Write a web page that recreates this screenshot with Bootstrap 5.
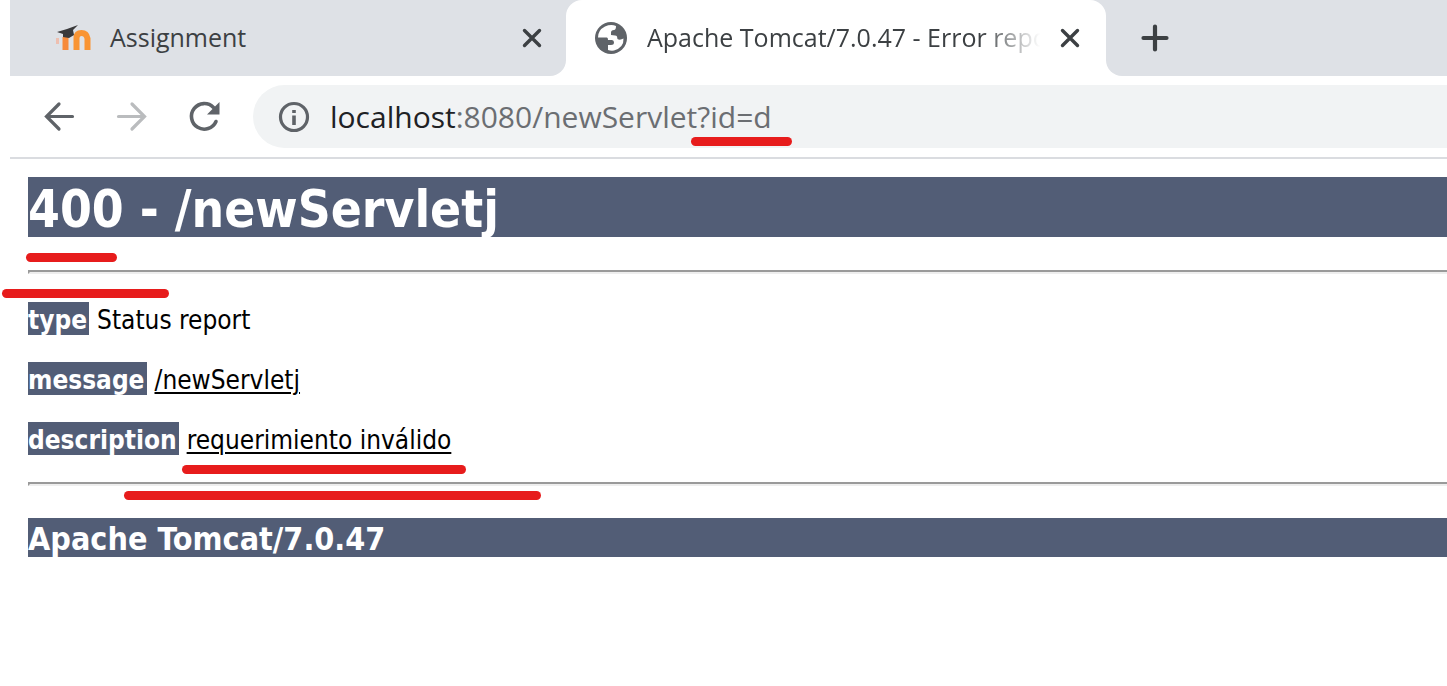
<!DOCTYPE html>
<html lang="en">
<head>
<meta charset="utf-8">
<meta name="viewport" content="width=device-width, initial-scale=1">
<title>Apache Tomcat/7.0.47 - Error report</title>
<link href="https://cdn.jsdelivr.net/npm/bootstrap@5.3.0/dist/css/bootstrap.min.css" rel="stylesheet">
<style>
  body { background: #fff; color: #000; overflow-x: hidden; }
  .browser { font-family: "Open Sans", "Noto Sans", sans-serif; margin-left: 10px; }
  .icon-btn { border: 0; background: none; padding: 0; line-height: 0; flex: none; color: #3c4043; }

  .tab-strip { height: 76px; background: #fff; }
  .tab-shade { background: #dee1e6; }
  .tab-item { font-size: 25px; line-height: 34px; color: #3c4043; }
  .tab-item a { color: inherit; padding-bottom: 2px; }
  .tab-idle { width: 556px; padding: 0 24px 0 44px; border-radius: 0 0 16px 0; }
  .tab-back { width: 540px; }
  .tab-active { background: #fff; height: 76px; padding: 0 26px 0 28px; border-radius: 16px 16px 0 0; }
  .tab-rest { padding-left: 34px; border-radius: 0 0 0 16px; }
  .tab-icon { margin-right: 19px; }
  .tab-close { margin-left: 20px; }
  .tab-title { overflow: hidden; white-space: nowrap; -webkit-mask-image: linear-gradient(to left, transparent, #000 60px); mask-image: linear-gradient(to left, transparent, #000 60px); }

  .tool-bar { height: 83px; padding-left: 32px; border-bottom: 2px solid #dadce0; }
  .tool-bar .icon-btn { color: #5f6368; margin-right: 36px; }
  .address-pill { height: 63px; margin-left: -5px; padding-left: 24px; background: #f1f3f4; border-radius: 32px 0 0 32px; font-size: 30px; line-height: 40px; }
  .address-pill .icon-btn { margin-right: 19px; }
  .address-pill label { color: #202124; }
  .address-pill input { border: 0; padding: 0; background: none; color: #6b6e72; outline: 0; min-width: 0; }

  .report { font-family: "DejaVu Sans Condensed", "DejaVu Sans", Tahoma, sans-serif; font-size: 26px; line-height: 29px; padding: 18px 0 0 28px; }
  .report h1, .report h3, .report b { background: #525d76; color: #fff; font-weight: 700; }
  .report h1 { font-size: 51px; line-height: 54px; padding-top: 6px; margin-bottom: 33px; }
  .report h3 { font-size: 32px; line-height: 35px; padding-top: 4px; margin: 0; }
  .report p { margin-bottom: 27px; display: flex; gap: 8px; }
  .report p > * { padding-top: 4px; }
  .report b { padding-right: 2px; }
  .report u { text-decoration-thickness: 2px; text-underline-offset: 3px; }
  .report hr { margin: 0 0 28px; height: 4px; opacity: 1; border: solid; border-width: 2px 0 2px 2px; border-color: #9a9a9a #eee #eee #9a9a9a; }
  .report hr.closing { margin-bottom: 32px; }

  .pen { position: absolute; height: 9px; border-radius: 5px; background: #e71c1c; }
  .pen-query { left: 438px; top: 52px; width: 101px; }
  .pen-code { left: 26px; top: 94px; width: 91px; }
  .pen-rule { left: 2px; top: 130px; width: 167px; }
  .pen-text { left: 182px; top: 306px; width: 284px; }
  .pen-foot { left: 124px; top: 332px; width: 417px; }
</style>
</head>
<body>
<header class="browser">
  <nav class="tab-strip d-flex" aria-label="Tabs">
    <div class="tab-item tab-shade tab-idle d-flex align-items-center">
      <svg class="flex-shrink-0 me-3" width="40" height="32" viewBox="0 0 40 32" aria-hidden="true">
        <path d="M11.500 28V15" fill="none" stroke="#f68a3a" stroke-width="6"/>
        <path d="M22.500 28V16q0-5 5-5t6 5.500V28" fill="none" stroke="#f99433" stroke-width="6"/>
        <path d="M3.500 16v6" stroke="#eebfb0" stroke-width="3"/>
        <path d="M3 10 13 7 24 3 19 8 20 13 15 16 9 15 9 12Z" fill="#39393b"/>
      </svg>
      <a href="#" class="text-decoration-none flex-grow-1">Assignment</a>
      <button class="icon-btn" type="button" aria-label="Close Assignment"><svg width="20" height="20" viewBox="0 0 20 20"><path d="M2.500 2.500 17.500 17.500M17.500 2.500 2.500 17.500" stroke="currentColor" stroke-width="3.400" stroke-linecap="round"/></svg></button>
    </div>
    <div class="tab-item tab-shade tab-back">
      <div class="tab-active d-flex align-items-center">
        <svg class="tab-icon flex-shrink-0" width="34" height="34" viewBox="0 0 34 34" aria-hidden="true">
          <circle cx="17" cy="17" r="16" fill="#5f6368"/>
          <path d="M4 16.500H13Q14 16.500 14 19H18Q20 19 20 21.500 20 24 17 24H14V29Q17 30 20 29.500 30 26.500 29.500 17.500 27 19 24.500 18.500 23 18 23 15.500 22 14 17 14V11.500Q17 9 20 9 22 9 22 5 17 3 11 5.500 4 9 4 16.500Z" fill="#fff"/>
        </svg>
        <a href="#" class="tab-title text-decoration-none flex-grow-1">Apache Tomcat/7.0.47 - Error repo</a>
        <button class="icon-btn tab-close" type="button" aria-label="Close error report"><svg width="20" height="20" viewBox="0 0 20 20"><path d="M2.500 2.500 17.500 17.500M17.500 2.500 2.500 17.500" stroke="currentColor" stroke-width="3.400" stroke-linecap="round"/></svg></button>
      </div>
    </div>
    <div class="tab-shade tab-rest d-flex align-items-center flex-grow-1">
      <button class="icon-btn" type="button" aria-label="New tab"><svg width="30" height="30" viewBox="0 0 30 30"><path d="M15 3.500V26.500M3.500 15H26.500" stroke="currentColor" stroke-width="4.200" stroke-linecap="round"/></svg></button>
    </div>
  </nav>
  <div class="tool-bar d-flex align-items-center">
    <button class="icon-btn" type="button" aria-label="Back"><svg width="36" height="36" viewBox="0 0 36 36" fill="none" stroke="currentColor" stroke-width="3.200" stroke-linecap="round"><path d="M30.500 17.500H5M17 5 4.500 17.500 17 30"/></svg></button>
    <button class="icon-btn" type="button" aria-label="Forward" disabled><svg width="36" height="36" viewBox="0 0 36 36" fill="none" stroke="#babcbe" stroke-width="3.200" stroke-linecap="round"><path d="M4.500 17.500H30M18 5 30.500 17.500 18 30"/></svg></button>
    <button class="icon-btn" type="button" aria-label="Reload"><svg width="36" height="36" viewBox="0 0 36 36"><path d="M27.500 8.500A12.800 12.800 0 1 0 30 22.500" fill="none" stroke="currentColor" stroke-width="3.600" stroke-linecap="round"/><path d="M33.500 3V15.500H21Z" fill="currentColor"/></svg></button>
    <div class="address-pill d-flex align-items-center flex-grow-1 position-relative">
      <button class="icon-btn" type="button" aria-label="Site information"><svg width="34" height="34" viewBox="0 0 34 34"><circle cx="17" cy="17" r="13.500" fill="none" stroke="currentColor" stroke-width="3.200"/><path d="M17 15.500V25M17 10V13" stroke="currentColor" stroke-width="3.600"/></svg></button>
      <label for="address">localhost</label>
      <input id="address" class="flex-grow-1" type="text" value=":8080/newServlet?id=d">
      <span class="pen pen-query"></span>
    </div>
  </div>
</header>
<main class="report position-relative">
  <h1>400 - /newServletj</h1>
  <hr>
  <p><b>type</b> <span>Status report</span></p>
  <p><b>message</b> <u>/newServletj</u></p>
  <p><b>description</b> <u>requerimiento inválido</u></p>
  <hr class="closing">
  <h3>Apache Tomcat/7.0.47</h3>
  <span class="pen pen-code"></span>
  <span class="pen pen-rule"></span>
  <span class="pen pen-text"></span>
  <span class="pen pen-foot"></span>
</main>
<script src="https://cdn.jsdelivr.net/npm/bootstrap@5.3.0/dist/js/bootstrap.bundle.min.js"></script>
</body>
</html>
